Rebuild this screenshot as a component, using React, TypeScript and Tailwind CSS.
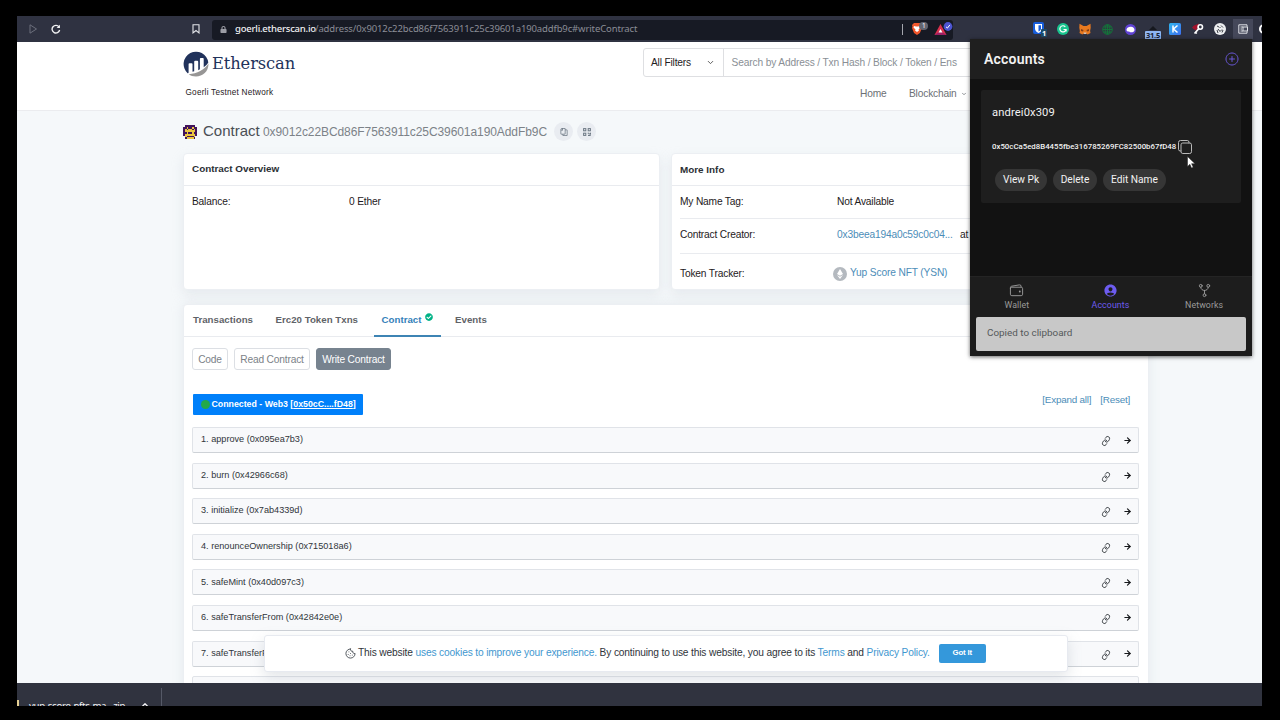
import React from "react";
import { ArrowRight, ChevronDown, ChevronUp, Cookie, Link } from "lucide-react";
import { FaCheckCircle, FaLock, FaRegCopy } from "react-icons/fa";
import {
  IoAddCircleOutline,
  IoCopyOutline,
  IoGitNetworkOutline,
  IoPersonCircle,
  IoWalletOutline,
} from "react-icons/io5";

const methods = [
  "approve (0x095ea7b3)",
  "burn (0x42966c68)",
  "initialize (0x7ab4339d)",
  "renounceOwnership (0x715018a6)",
  "safeMint (0x40d097c3)",
  "safeTransferFrom (0x42842e0e)",
  "safeTransferFrom (0xb88d4fde)",
];

function BraveIcon() {
  return (
    <svg width="28" height="14" viewBox="0 0 28 14">
      <path d="M3 1h6l2 2-.5 1.500.4 1.500-2 5L6 13l-3-2-2-5 .4-1.500L1 3z" fill="#f0562b" />
      <path d="M3 4l2 .6h2L9 4l.5 1.500-2 2 .5 1L6 10 4 8.500l.5-1-2-2z" fill="#fff" />
      <rect x="8" y="0" width="9" height="8" rx="4" fill="#63656f" />
      <text x="11" y="6.300" fontSize="6.500" fill="#fff" fontFamily="Noto Sans, sans-serif">1</text>
    </svg>
  );
}

function RewardsIcon() {
  return (
    <svg className="shrink-0" width="19" height="15" viewBox="0 0 19 15">
      <path d="M6.500 2L12.500 13H.5z" fill="#d8304c" />
      <path d="M.5 13l6-4 6 4z" fill="#9b1f63" />
      <path d="M6.500 7l2 3.500h-4z" fill="#fff" />
      <circle cx="14" cy="4.500" r="4.400" fill="#4c54d2" />
      <path d="M12 4.800l1.400 1.300 2.500-3.200" fill="none" stroke="#fff" strokeWidth="1" />
    </svg>
  );
}

function Extensions() {
  const cell = "flex h-[26px] w-[22.5px] shrink-0 items-center justify-center";
  return (
    <div className="flex h-[26px] items-center">
      <div className={cell}>
        <svg width="14" height="16" viewBox="0 0 14 16">
          <rect x="0" y="1" width="11" height="12" rx="2" fill="#175ddc" />
          <path d="M2 3h7v4.500c0 2-1.500 3.500-3.500 4.500C3.500 11 2 9.500 2 7.500z" fill="#fff" />
          <path d="M5.500 4.200H8v3.300c0 1.300-1 2.200-2.500 3z" fill="#175ddc" />
          <rect x="8" y="8" width="6" height="8" rx="1" fill="#1c4a68" />
          <text x="9" y="15" fontSize="7.500" fontWeight="700" fill="#fff" fontFamily="Noto Sans, sans-serif">1</text>
        </svg>
      </div>
      <div className={cell}>
        <svg width="12" height="12" viewBox="0 0 12 12">
          <circle cx="6" cy="6" r="6" fill="#19c48f" />
          <path d="M8.300 3.800A3.100 3.100 0 1 0 9 6.500H6.500M9.100 6.300v2.300" fill="none" stroke="#fff" strokeWidth="1.200" />
        </svg>
      </div>
      <div className={cell}>
        <svg width="12" height="12" viewBox="0 0 12 12">
          <path d="M.5.800L4.500 3h3l4-2.200.2 4-.6 3.200.4 2-2.800 1.500-1.200-.8h-3l-1.200.8L.5 10l.4-2L.3 4.800z" fill="#e8791f" />
          <path d="M2 6l2.500 1L4 8.500 2 8zM10 6L7.500 7 8 8.500l2-.5z" fill="#7c3d18" />
          <path d="M4.500 9.500h3l-.4 1.500H4.900z" fill="#d7c1b3" />
        </svg>
      </div>
      <div className={cell}>
        <svg width="11" height="11" viewBox="0 0 11 11" fill="none" stroke="#14733a" strokeWidth="1">
          <circle cx="5.500" cy="5.500" r="4.800" />
          <ellipse cx="5.500" cy="5.500" rx="2.300" ry="4.800" />
          <path d="M.7 5.500h9.600M1.500 3h8M1.500 8h8M5.500.7v9.600" />
        </svg>
      </div>
      <div className={cell}>
        <svg width="11" height="11" viewBox="0 0 11 11">
          <circle cx="5.500" cy="5.500" r="5.500" fill="#6043d4" />
          <path d="M1.500 5.500C2 3.500 4 2.600 6 2.800c2 .2 3.500 1.500 3.500 3.200 0 1.500-1.500 2.300-3.500 2.300-1 0-1.500-.8-2.500-.8S1.300 7 1.500 5.500z" fill="#fff" />
        </svg>
      </div>
      <div className={cell}>
        <svg className="mt-[5px]" width="16" height="16" viewBox="0 0 16 16">
          <path d="M4 6l4-4 4 4z" fill="#16181f" />
          <rect x="0" y="7" width="16" height="9" rx="1" fill="#8fb6f3" />
          <text x="1" y="14.300" fontSize="7.500" fontWeight="700" fill="#1a2233" textLength="14" fontFamily="Noto Sans, sans-serif">31.5</text>
        </svg>
      </div>
      <div className={cell}>
        <svg width="12" height="12" viewBox="0 0 12 12">
          <defs>
            <linearGradient id="kg" x1="0" y1="0" x2="1" y2="1">
              <stop offset="0" stopColor="#2fb5ee" />
              <stop offset="1" stopColor="#3e6ff0" />
            </linearGradient>
          </defs>
          <rect width="12" height="12" rx="1.500" fill="url(#kg)" />
          <path d="M4 2.500v7M8.500 2.500L4.500 6l4 3.500" fill="none" stroke="#fff" strokeWidth="1.500" />
        </svg>
      </div>
      <div className={cell}>
        <svg width="12" height="12" viewBox="0 0 12 12">
          <path d="M0 4.500L2 2.500l5-2L6 5 4 7.500 1.500 6z" fill="#a3122c" />
          <circle cx="8.300" cy="4" r="2.200" fill="none" stroke="#fff" strokeWidth="1.600" />
          <path d="M6.800 5.600L2.500 10.500M3.500 9.200l1.300 1.300" stroke="#fff" strokeWidth="1.600" />
        </svg>
      </div>
      <div className={cell}>
        <svg width="12" height="12" viewBox="0 0 12 12">
          <circle cx="6" cy="6" r="6" fill="#eceef0" />
          <path d="M3 3l2 1M7 2.500l2 2M4 6l2 2.500 2-2M3 7l1 3M9 7l-1 2.500M6 4v1" stroke="#3c4048" strokeWidth="1" fill="none" />
        </svg>
      </div>
      <div className="ml-[1.500px] flex h-[20px] w-[20px] shrink-0 items-center justify-center bg-[#45485a]">
        <svg width="10" height="10" viewBox="0 0 10 10" fill="none" stroke="#dfe1e6" strokeWidth="1">
          <path d="M9 2.500V.8H.8v8.400H9V7.500M2.500 3H5M2.500 5h1.500M2.500 7H5" />
          <rect x="5" y="3" width="4.500" height="4" />
        </svg>
      </div>
      <div className="flex h-[26px] flex-1 items-center pl-[6px]">
        <span className="size-[10px] shrink-0 rounded-full border-2 border-white" />
      </div>
    </div>
  );
}

function BrowserBar() {
  return (
    <div className="flex h-[26px] shrink-0 items-center overflow-hidden bg-[#2f3241]">
      <div className="flex w-[195px] shrink-0 items-center">
        <svg className="ml-3 shrink-0" width="9" height="10" viewBox="0 0 9 10">
          <path d="M1 .8l6.500 4.200L1 9.200z" fill="none" stroke="#6c6f7c" strokeWidth="1" />
        </svg>
        <svg className="ml-[13px] shrink-0" width="10" height="10" viewBox="0 0 11 11">
          <path d="M8.800 3.200A4.200 4.200 0 1 0 9.500 6.600" fill="none" stroke="#f1f1f3" strokeWidth="1.500" />
          <path d="M9.800.8v3.700H6.200z" fill="#f1f1f3" />
        </svg>
        <svg className="ml-[131px] shrink-0" width="8" height="10" viewBox="0 0 8 10">
          <path d="M1 .7h6v8.200L4 6.500 1 8.900z" fill="none" stroke="#e4e5e9" strokeWidth="1.100" />
        </svg>
      </div>
      <div className="mt-px flex h-[20px] w-[741px] shrink-0 items-center rounded-[3px] bg-[#171a24] pl-[8px] font-['Noto_Sans',sans-serif] text-[9.5px] text-[#8b8d96]">
        <FaLock className="mr-[8px] shrink-0 text-[#9b9da5]" size={7} />
        <span className="-mt-px w-[80px] shrink-0 whitespace-nowrap font-medium tracking-[-0.22px] text-[#f0f0f2]">goerli.etherscan.io</span>
        <span className="-mt-px flex-1 whitespace-nowrap tracking-[-0.12px]">/address/0x9012c22bcd86f7563911c25c39601a190addfb9c#writeContract</span>
        <span className="mr-[8px] h-[11px] w-px bg-[#a4a6ad]" />
        <div className="flex w-[42px] shrink-0">
          <div className="w-[23px] shrink-0 overflow-hidden"><BraveIcon /></div>
          <RewardsIcon />
        </div>
      </div>
      <div className="ml-[76px] w-[240px] shrink-0">
        <Extensions />
      </div>
    </div>
  );
}

function EtherscanLogo() {
  return (
    <div className="flex items-center">
      <svg width="26" height="26" viewBox="0 0 26 26">
        <path d="M4.600 22.200A12.400 12.400 0 1 1 25.300 11.500C24 13.500 22.500 15 20.700 16.300V7.800a.9.900 0 0 0-.9-.9h-2a.9.900 0 0 0-.9.900v10.500l-1.700.9V10.700a.9.900 0 0 0-.9-.9h-2.200a.9.900 0 0 0-.9.900v9.600l-1.700.5v-7.700a.9.900 0 0 0-.9-.9H6.500a.9.900 0 0 0-.9.900v8.100c0 .6-.4 1-1 1z" fill="#21325b" />
        <path d="M25.500 12.500C25.700 20.500 19.500 25.500 13 25.500c-3 0-5.400-1-7.200-2.300C14 22.800 21.500 18.500 25.500 12.500z" fill="#979695" />
      </svg>
      <span className="ml-[3px] mt-px font-['DejaVu_Serif',serif] text-[16.3px] leading-none tracking-[-0.1px] text-[#21325b]">Etherscan</span>
    </div>
  );
}

function SiteHeader() {
  return (
    <header className="flex h-[69px] shrink-0 border-b border-[#ebecef] bg-white">
      <div className="ml-[166px] flex w-[460px] shrink-0 flex-col pt-[9px]">
        <EtherscanLogo />
        <span className="ml-[2.5px] mt-[11px] text-[8.2px] leading-[10px] tracking-[0.23px] text-[#1e2022]">Goerli Testnet Network</span>
      </div>
      <div className="w-[500px] shrink-0 pt-[6px]">
        <div className="flex h-[29px] items-center rounded-[3px] border border-[#dedfe2]">
          <div className="flex h-full w-[80px] shrink-0 items-center border-r border-[#dedfe2] pl-[7px] text-[#1e2022]">
            <span className="w-[55px]">All Filters</span>
            <ChevronDown size={9} strokeWidth={2.5} className="text-[#555]" />
          </div>
          <span className="pl-[7.5px] tracking-[-0.14px] text-[#8a8f95]">Search by Address / Txn Hash / Block / Token / Ens</span>
        </div>
        <nav className="flex pl-[217px] pt-[10px] leading-[13px] text-[#6c7075]">
          <span className="w-[49px]">Home</span>
          <span className="flex items-center gap-1">Blockchain <ChevronDown size={6} strokeWidth={3} /></span>
        </nav>
      </div>
    </header>
  );
}

function Identicon() {
  const rows = ["01111110", "11211211", "12122121", "12222221", "11211211", "12222221", "02111120", "01222210"];
  return (
    <svg width="14" height="14" viewBox="0 0 8 8" shapeRendering="crispEdges">
      {rows.flatMap((r, y) =>
        r.split("").map((c, x) =>
          c === "0" ? null : <rect key={`${x}-${y}`} x={x} y={y} width="1" height="1" fill={c === "1" ? "#42145c" : "#ebc63f"} />
        )
      )}
    </svg>
  );
}

function TitleRow() {
  return (
    <div className="flex h-[42px] items-center pb-px tracking-normal">
      <Identicon />
      <h1 className="ml-[6px] w-[60px] text-[15px] text-[#4a4f55]">Contract</h1>
      <span className="w-[291px] whitespace-nowrap text-[12px] tracking-[-0.08px] text-[#7c8288]">0x9012c22BCd86F7563911c25C39601a190AddFb9C</span>
      <span className="flex size-[19px] items-center justify-center rounded-full bg-[#e9ecf1]">
        <FaRegCopy size={8} className="-scale-x-100 text-[#6d7884]" />
      </span>
      <span className="ml-[4px] flex size-[19px] items-center justify-center rounded-full bg-[#e9ecf1]">
        <svg width="8" height="8" viewBox="0 0 8 8" fill="none" stroke="#6d7884">
          <rect x=".6" y=".6" width="2.200" height="2.200" /><rect x="5.200" y=".6" width="2.200" height="2.200" />
          <rect x=".6" y="5.200" width="2.200" height="2.200" /><path d="M4.700 5.200h1.500v1.500M7.500 4.700v2M5 7.500h2.700" />
        </svg>
      </span>
    </div>
  );
}

function Overview() {
  const card = "h-[137px] rounded-[4px] border border-[#eceff3] bg-white shadow-[0_5px_12px_rgba(189,197,209,0.28)]";
  return (
    <div className="flex gap-[11px]">
      <section className={`${card} w-[477px] shrink-0`}>
        <h2 className="flex h-[32px] items-center border-b border-[#e9ebef] pl-[8px] text-[9.9px] font-bold tracking-normal text-[#2b2f34]">Contract Overview</h2>
        <div className="flex h-[32px] items-center pl-[8px]">
          <span className="w-[157px]">Balance:</span>
          <span>0 Ether</span>
        </div>
      </section>
      <section className={`${card} w-[478px] shrink-0 px-[8px]`}>
        <h2 className="-mx-[8px] flex h-[32px] items-center border-b border-[#e9ebef] pl-[8px] pt-px text-[9.9px] font-bold tracking-normal text-[#2b2f34]">More Info</h2>
        <div className="flex h-[33px] items-center border-b border-[#e9ebef]">
          <span className="w-[157px]">My Name Tag:</span>
          <span>Not Available</span>
        </div>
        <div className="flex h-[35px] items-center border-b border-[#e9ebef] pb-[3px]">
          <span className="w-[157px]">Contract Creator:</span>
          <span className="w-[123px] text-[#4c8db8]">0x3beea194a0c59c0c04...</span>
          <span>at</span>
        </div>
        <div className="flex h-[36px] items-center pt-[3px]">
          <span className="w-[153px]">Token Tracker:</span>
          <svg width="14" height="14" viewBox="0 0 14 14">
            <circle cx="7" cy="7" r="7" fill="#b4b9bf" />
            <path d="M7 2l3 5-3 1.800L4 7zM7 12L4 8l3 1.700L10 8z" fill="#fff" />
          </svg>
          <span className="-mt-px ml-[3px] tracking-[-0.14px] text-[#4c8db8]">Yup Score NFT (YSN)</span>
        </div>
      </section>
    </div>
  );
}

function ContractPanel() {
  const tool = "flex h-[22px] items-center justify-center rounded-[3px] border pt-px";
  return (
    <section className="mt-[14px] h-[400px] w-[966px] rounded-t-[4px] border border-[#eceff3] bg-white shadow-[0_0_12px_rgba(189,197,209,0.28)]">
      <nav className="flex h-[32px] border-b border-[#e9ebef] pl-[9px] text-[9.7px] font-bold leading-[30px] tracking-[0.02px] text-[#5f6368]">
        <span className="w-[82.5px]">Transactions</span>
        <span className="w-[98px]">Erc20 Token Txns</span>
        <span className="flex h-[32px] w-[67.5px] border-b-2 border-[#3d84b4] pl-[8px] text-[#3481ba]">
          Contract
          <FaCheckCircle size={8} className="ml-[3px] mt-[8px] text-[#00b286]" />
        </span>
        <span className="ml-[14px]">Events</span>
      </nav>
      <div className="flex gap-[6px] pl-[8px] pt-[11px] text-[#7c8288]">
        <span className={`${tool} w-[36px] border-[#dcdfe4]`}>Code</span>
        <span className={`${tool} w-[76px] border-[#dcdfe4]`}>Read Contract</span>
        <span className={`${tool} w-[75px] border-[#77838f] bg-[#77838f] text-white`}>Write Contract</span>
      </div>
      <div className="flex h-[45px] items-end justify-between pl-[9px] pr-[18px]">
        <span className="flex h-[21px] w-[170px] items-center whitespace-nowrap rounded-[1px] bg-[#0080fa] pl-[8px] text-[8.8px] font-bold tracking-[-0.01px] text-white">
          <span className="mr-[1.5px] size-[9px] rounded-full bg-[#23a94a]" />
          Connected - Web3&nbsp;[<u>0x50cC....fD48</u>]
        </span>
        <span className="flex gap-[9px] pb-[9px] text-[9.9px] leading-[13px] tracking-[-0.22px] text-[#4c8db8]">
          <span>[Expand all]</span>
          <span>[Reset]</span>
        </span>
      </div>
      <ol className="mt-[12px] flex flex-col gap-[9.6px] px-[8px] text-[9.15px] tracking-[0px] text-[#30353a]">
        {methods.map((m, i) => (
          <li key={m} className="flex h-[26px] w-[947px] shrink-0 items-center rounded-[2px] border border-[#e0e3e8] border-b-[#ced2d7] bg-[#f8f9fb] pl-[8px] pr-[6px]">
            <span className="flex-1">{i + 1}. {m}</span>
            <Link size={10} strokeWidth={2} className="mr-[12px] mt-[2px] -rotate-12" />
            <ArrowRight size={9} strokeWidth={3.2} className="text-[#17191c]" />
          </li>
        ))}
        <li className="h-[26px] w-[947px] shrink-0 rounded-[2px] border border-[#e0e3e8] bg-[#f8f9fb]" />
      </ol>
    </section>
  );
}

function CookieBar() {
  return (
    <div className="absolute left-[247px] top-[593px] flex h-[37px] w-[804px] items-center rounded-[3px] border border-[#e7eaf0] bg-white pb-px pl-[80px] text-[10.2px] tracking-[-0.15px] text-[#2f343a] shadow-[0_5px_14px_rgba(140,152,164,0.25)]">
      <Cookie size={11} strokeWidth={2} className="mr-[2px] text-[#454b52]" />
      <span className="whitespace-nowrap">
        This website <span className="text-[#3f97cf]">uses cookies to improve your experience.</span> By continuing to use this website, you agree to its{" "}
        <span className="text-[#3f97cf]">Terms</span> and <span className="text-[#3f97cf]">Privacy Policy.</span>
      </span>
      <span className="ml-[9px] flex h-[19px] w-[47px] items-center justify-center rounded-[2px] bg-[#3498db] text-[7.8px] font-bold tracking-[-0.15px] text-white">Got It</span>
    </div>
  );
}

function WalletPopup() {
  const pill = "flex h-[22px] items-center justify-center rounded-full bg-[#363636]";
  return (
    <aside className="absolute left-[970px] top-[39px] flex h-[317px] w-[282px] flex-col bg-[#1c1c1c] font-['Roboto',sans-serif] text-[10.2px] tracking-normal text-[#f2f2f2] shadow-[0_1px_4px_rgba(0,0,0,0.6)]">
      <div className="flex h-[40px] shrink-0 items-center justify-between bg-[#1f1f1f] pl-[14px] pr-[12px]">
        <span className="text-[14px] font-semibold tracking-[0.2px]">Accounts</span>
        <IoAddCircleOutline size={16} className="text-[#6a58d8]" />
      </div>
      <div className="h-[197px] shrink-0 bg-[#121212] px-[11px] pt-[11px]">
        <div className="h-[113px] rounded-[2px] bg-[#1e1e1e] pl-[11px] pt-[16px]">
          <p className="text-[11.2px] leading-[14px] tracking-[0.12px]">andrei0x309</p>
          <div className="mt-[18px] flex h-[17px] items-center">
            <span className="w-[185px] whitespace-nowrap text-[7.8px] font-medium tracking-[0.02px]">0x50cCa5ed8B4455fbe316785269FC82500b67fD48</span>
            <IoCopyOutline size={16} className="shrink-0 text-[#b9b9b9]" />
          </div>
          <div className="ml-[3px] mt-[14px] flex gap-[6px]">
            <span className={`${pill} w-[52px]`}>View Pk</span>
            <span className={`${pill} w-[44px]`}>Delete</span>
            <span className={`${pill} w-[63px]`}>Edit Name</span>
          </div>
        </div>
      </div>
      <div className="grid h-[41px] shrink-0 grid-cols-3 border-t border-[#242424] bg-[#1d1d1d] pr-px pt-[6px] text-[8.8px] leading-[11px] tracking-[0.1px] text-[#9a9a9a]">
        <div className="flex flex-col items-center gap-[2px]"><IoWalletOutline size={15} />Wallet</div>
        <div className="flex flex-col items-center gap-[2px] text-[#6d5cf0]"><IoPersonCircle size={15} />Accounts</div>
        <div className="flex flex-col items-center gap-[2px]"><IoGitNetworkOutline size={15} />Networks</div>
      </div>
      <div className="mx-[6px] flex h-[34px] w-[270px] shrink-0 items-center rounded-[2px] bg-[#c8c8c8] pb-px pl-[11px] text-[9.9px] text-[#55585a]">Copied to clipboard</div>
      <svg className="absolute left-[217px] top-[117px]" width="9" height="13" viewBox="0 0 9 13">
        <path d="M.5.500v10l2.400-2.200 1.600 3.800 1.700-.8-1.600-3.600H8z" fill="#fff" stroke="#222" strokeWidth=".5" />
      </svg>
    </aside>
  );
}

function DownloadBar() {
  return (
    <div className="flex h-[23px] shrink-0 items-start overflow-hidden bg-[#30333f] font-['Noto_Sans',sans-serif] text-[9.6px] text-[#f4f4f6]">
      <span className="mt-[17px] h-[8px] w-[2px] bg-[#e6cf93]" />
      <span className="mt-[16px] w-[121px] shrink-0 whitespace-nowrap pl-[10px] leading-[14px] tracking-[-0.27px]">yup-score-nfts-ma...zip</span>
      <ChevronUp size={10} strokeWidth={3} className="mt-[17px] shrink-0" />
      <span className="ml-[11px] mt-[5px] h-[18px] w-px bg-[#555967]" />
    </div>
  );
}

export default function App() {
  return (
    <div className="relative h-[720px] w-[1280px] overflow-hidden bg-black pl-[17px] pt-[16px] font-['Liberation_Sans',Arial,sans-serif] text-[10.2px] leading-normal tracking-[-0.17px] text-[#1e2022]">
      <div className="flex h-[690px] w-[1245px] flex-col overflow-hidden">
        <BrowserBar />
        <div className="relative flex h-[641px] shrink-0 flex-col overflow-hidden bg-[#f5f8fa]">
          <SiteHeader />
          <main className="flex flex-col pl-[166px]">
            <TitleRow />
            <Overview />
            <ContractPanel />
          </main>
          <CookieBar />
        </div>
        <DownloadBar />
      </div>
      <WalletPopup />
    </div>
  );
}
